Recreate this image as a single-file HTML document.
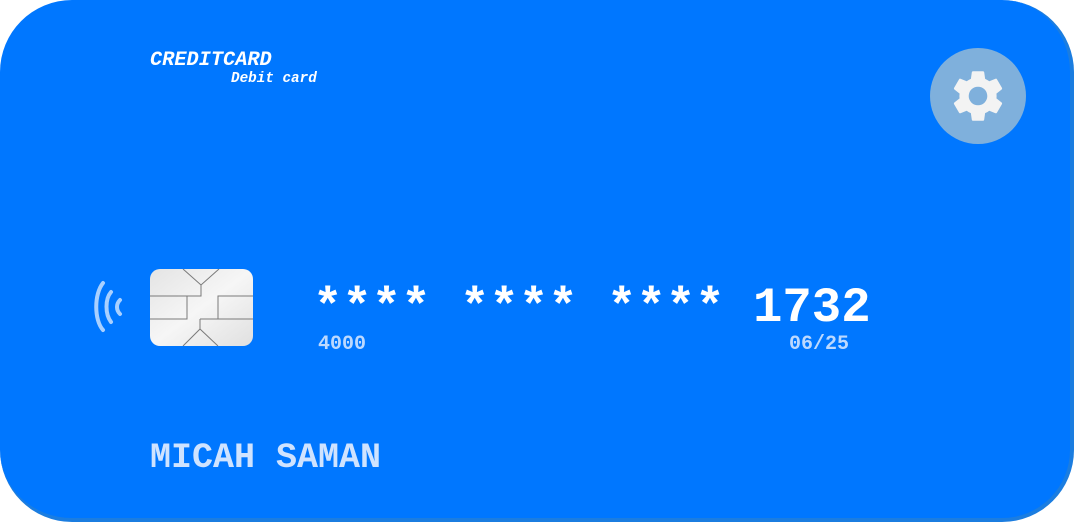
<!DOCTYPE html>
<html><head><style>
body{margin:0;width:1074px;height:522px;background:#fff;overflow:hidden;font-family:"Liberation Mono",monospace;}
.card{position:absolute;left:0;top:0;width:1070px;height:518px;border-radius:72px;background:#0077ff;border-right:4px solid #1b7de0;border-bottom:4px solid #1b7de0;}
.t{position:absolute;font-weight:bold;white-space:pre;}
</style></head><body>
<div class="card"></div>
<div class="t" style="left:150px;top:49px;font-size:20.3px;font-style:italic;color:#fff;">CREDITCARD</div>
<div class="t" style="left:231px;top:71px;font-size:14.3px;font-style:italic;color:#fff;">Debit card</div>
<div style="position:absolute;left:930px;top:48px;width:96px;height:96px;border-radius:50%;background:#7fb0dc;"></div>
<svg style="position:absolute;left:947px;top:65px" width="62" height="62" viewBox="0 0 24 24"><path fill="#f3f3f3" d="M19.14 12.94c.04-.3.06-.61.06-.94 0-.32-.02-.64-.07-.94l2.03-1.58a.49.49 0 0 0 .12-.61l-1.92-3.32a.49.49 0 0 0-.59-.22l-2.39.96c-.5-.38-1.030-.7-1.62-.94l-.36-2.54a.48.48 0 0 0-.48-.41h-3.84c-.24 0-.43.17-.47.41l-.36 2.54c-.59.24-1.13.57-1.62.94l-2.39-.96a.48.48 0 0 0-.59.22L2.74 8.87a.47.47 0 0 0 .12.61l2.03 1.58c-.05.3-.09.63-.09.94s.02.64.07.94l-2.03 1.58a.49.49 0 0 0-.12.61l1.92 3.32c.12.22.37.29.59.22l2.39-.96c.5.38 1.03.7 1.62.94l.36 2.54c.05.24.24.41.48.41h3.84c.24 0 .44-.17.47-.41l.36-2.54c.59-.24 1.13-.56 1.62-.94l2.39.96c.22.08.47 0 .59-.22l1.92-3.32c.12-.22.07-.47-.12-.61l-2.01-1.58zM12 15.6a3.6 3.6 0 1 1 0-7.2 3.6 3.6 0 0 1 0 7.2z"/></svg>
<svg style="position:absolute;left:92px;top:280px" width="36" height="54" viewBox="0 0 36 54"><g fill="none" stroke="#a9d0ff" stroke-width="4" stroke-linecap="round"><path d="M11 3 C2 14 2 40 11 50"/><path d="M19 12 C13 19 13 34 19 42"/><path d="M28 20 C24 24 24 30 28 34"/></g></svg>
<svg style="position:absolute;left:150px;top:269px" width="103" height="77" viewBox="0 0 103 77"><defs><linearGradient id="g" x1="0" y1="0" x2="1" y2="1"><stop offset="0" stop-color="#e4e4e4"/><stop offset=".5" stop-color="#f6f6f6"/><stop offset="1" stop-color="#e0e0e0"/></linearGradient></defs><rect width="103" height="77" rx="10" fill="url(#g)"/><g fill="none" stroke="#7a7a7a" stroke-width="1"><path d="M33 0 L51 16 L69 0"/><path d="M51 16 V27 H0"/><path d="M37 27 V50 H0"/><path d="M50 50 V60 L33 77 M50 60 L68 77"/><path d="M103 27 H68 V50 H50 H103"/></g></svg>
<div class="t" style="left:313px;top:280px;font-size:49px;color:#fff;">**** **** ****</div>
<div class="t" style="left:753px;top:280px;font-size:49px;color:#fff;">1732</div>
<div class="t" style="left:318px;top:333px;font-size:20px;color:#bcd9ff;">4000</div>
<div class="t" style="left:789px;top:333px;font-size:20px;color:#bcd9ff;">06/25</div>
<div class="t" style="left:150px;top:438px;font-size:35px;color:#cfe3ff;">MICAH SAMAN</div>
</body></html>
